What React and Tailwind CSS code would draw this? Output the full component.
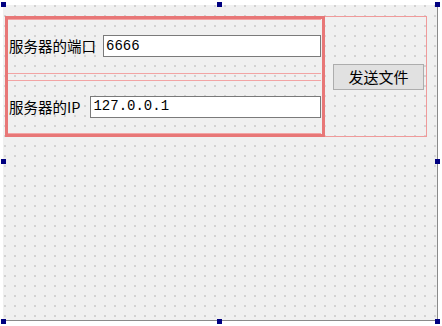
const HANDLES = [
  'left-[1px] top-[2px]',
  'left-[217px] top-[2px]',
  'left-[435px] top-[2px]',
  'left-[1px] top-[159px]',
  'left-[435px] top-[159px]',
  'left-[1px] top-[319px]',
  'left-[217px] top-[319px]',
  'left-[435px] top-[319px]',
]

function FieldRow({ label, value, gap }) {
  return (
    <div className="flex-1 flex items-center border-y border-[#f2a4a4] pl-[1px]">
      <span className={`text-[14.5px] leading-none text-black whitespace-nowrap ${gap}`}>{label}</span>
      <div className="flex-1 h-[22px] bg-white border border-[#7a7a7a] flex items-center pl-[2px]">
        <span className="font-['Liberation_Mono',monospace] text-[14px] text-black">{value}</span>
      </div>
    </div>
  )
}

export default function App() {
  return (
    <div className="relative w-[442px] h-[326px] bg-white overflow-hidden font-['Noto_Sans_CJK_SC',sans-serif]">
      {/* form canvas */}
      <div className="ml-[3px] mt-[5px] w-[435px] h-[316px] bg-[#f0f0f0] bg-[radial-gradient(circle,#c8c8c8_0.6px,transparent_1px)] bg-[length:10px_10px] bg-[position:-3px_-4px] border-r border-b border-[#8a8a8a] pl-[2px] pt-[11px]">
        <div className="flex w-[422px] h-[121px]">
          {/* vertical layout */}
          <div className="w-[320px] border-[3px] border-[#e87777] flex flex-col gap-[6px] pr-[1px]">
            <FieldRow label="服务器的端口" value="6666" gap="mr-[7px]" />
            <FieldRow label="服务器的IP" value="127.0.0.1" gap="mr-[10px]" />
          </div>
          {/* button column */}
          <div className="flex-1 border-y border-r border-[#f09a9a] flex items-center pl-[8px] pr-[2px]">
            <button className="w-[91px] h-[26px] bg-[#e1e1e1] border border-[#adadad] text-[15px] text-black leading-none">
              发送文件
            </button>
          </div>
        </div>
      </div>

      {HANDLES.map((pos) => (
        <div key={pos} className={`absolute w-[5px] h-[5px] bg-[#000080] ${pos}`} />
      ))}
    </div>
  )
}
